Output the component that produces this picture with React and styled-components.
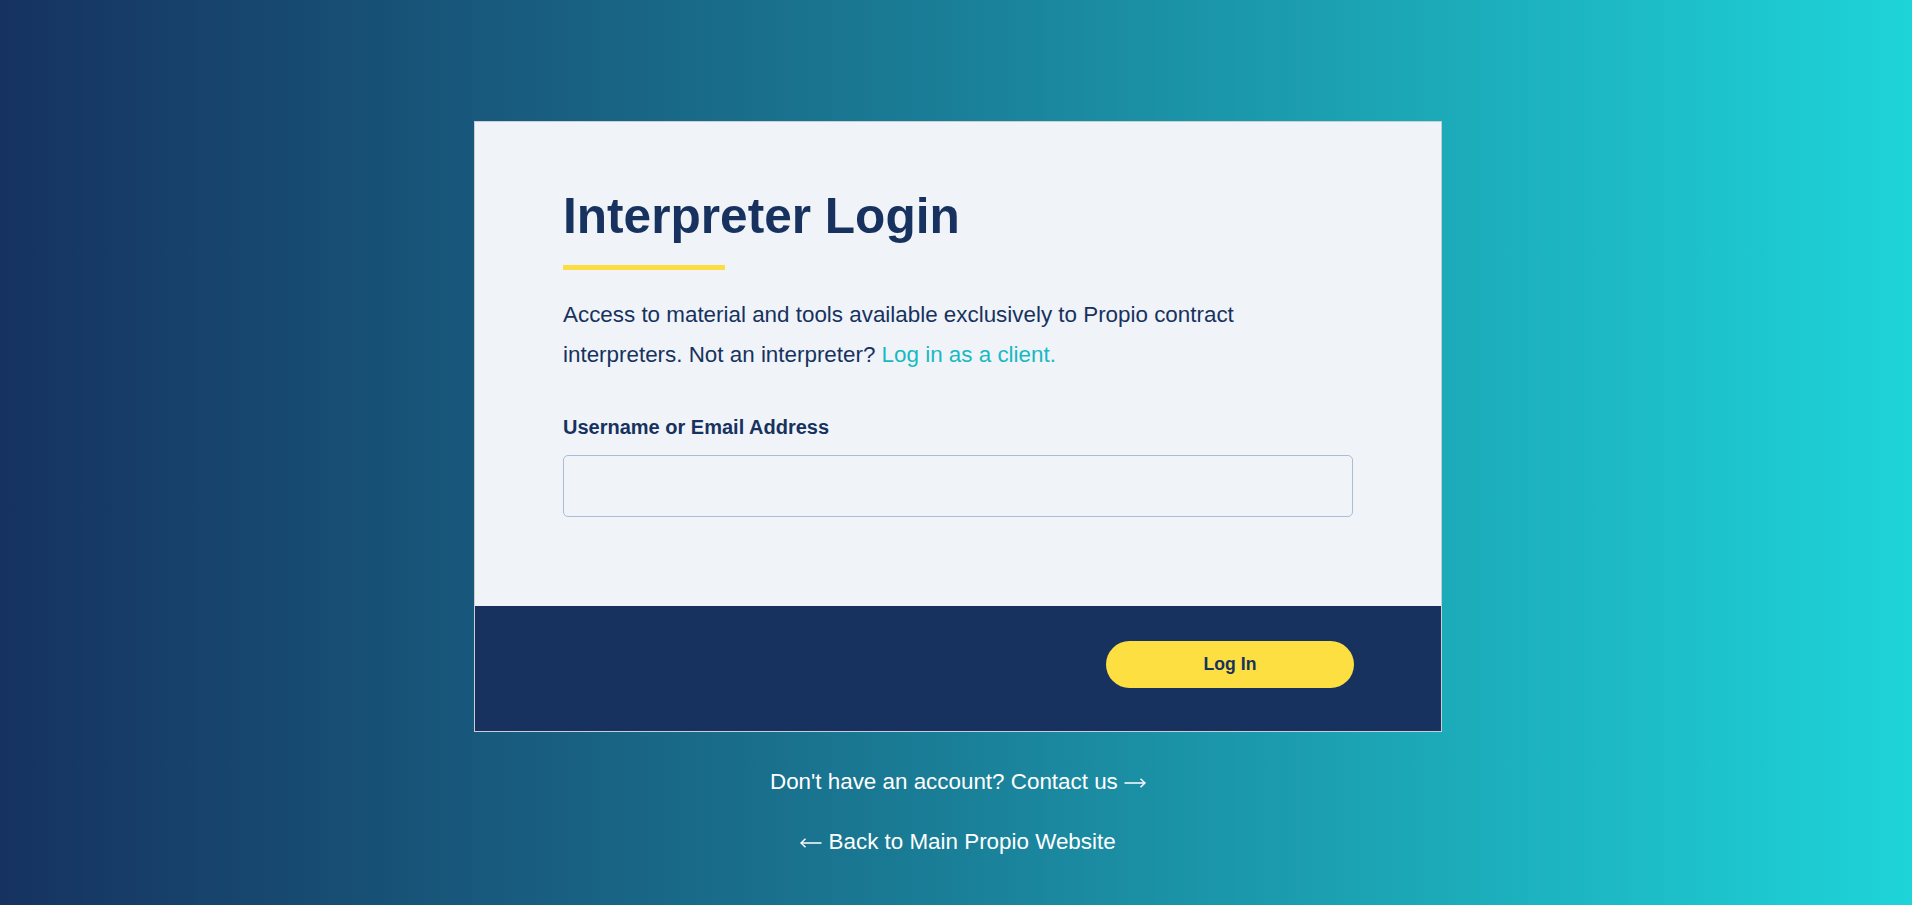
import React from 'react'
import styled, { createGlobalStyle } from 'styled-components'

const GlobalStyle = createGlobalStyle`
  html, body {
    margin: 0;
    padding: 0;
  }
  body {
    font-family: "Liberation Sans", Arial, sans-serif;
  }
  * {
    box-sizing: border-box;
  }
`

const navy = '#17325e'

const Page = styled.div`
  min-height: 100vh;
  background: linear-gradient(90deg, #163260 0%, #1a7f98 50%, #1ed4d9 100%);
  padding: 121px 0 0 4px;
  display: flex;
  flex-direction: column;
  align-items: center;
`

const Card = styled.div`
  width: 968px;
  border: 1px solid #c9ced6;
  background: #f0f4f9;
`

const CardBody = styled.div`
  padding: 66px 88px 89px;
`

const Title = styled.h1`
  margin: 0;
  font-size: 49.6px;
  line-height: 57px;
  font-weight: 700;
  color: ${navy};
`

const Underline = styled.div`
  width: 162px;
  height: 5px;
  margin-top: 20px;
  background: #fdde42;
`

const Intro = styled.p`
  margin: 25px 0 0;
  font-size: 22.4px;
  line-height: 40px;
  color: ${navy};
`

const ClientLink = styled.a`
  color: #18b9c3;
  text-decoration: none;
`

const Label = styled.label`
  display: block;
  margin-top: 41px;
  font-size: 20px;
  line-height: 23px;
  font-weight: 700;
  color: ${navy};
`

const Input = styled.input`
  display: block;
  width: 100%;
  height: 62px;
  margin-top: 16px;
  border: 1px solid #aabdd6;
  border-radius: 5px;
  background: transparent;
  padding: 0 16px;
  font-size: 20px;
  font-family: inherit;
  color: ${navy};
  outline: none;
`

const CardFooter = styled.div`
  background: ${navy};
  padding: 35px 87px 43px;
  display: flex;
  justify-content: flex-end;
`

const LoginButton = styled.button`
  width: 248px;
  height: 47px;
  border: none;
  border-radius: 24px;
  background: #fddf42;
  color: ${navy};
  font-family: inherit;
  font-size: 17.6px;
  font-weight: 700;
  cursor: pointer;
`

const Links = styled.div`
  margin-top: 36px;
  display: flex;
  flex-direction: column;
  align-items: center;
  gap: 33px;
`

const BottomLink = styled.a`
  color: #fff;
  font-size: 22.4px;
  line-height: 27px;
  text-decoration: none;
  white-space: nowrap;
`

const ArrowIcon = styled.svg`
  width: 22px;
  height: 12px;
  vertical-align: 0px;
  transform: ${(p) => (p.$left ? 'scaleX(-1)' : 'none')};
`

function Arrow({ left }) {
  return (
    <ArrowIcon $left={left} viewBox="0 0 22 12" fill="none" stroke="#fff" strokeWidth="1.5">
      <path d="M0.5 6H21" />
      <path d="M16.5 1.8L21 6L16.5 10.2" />
    </ArrowIcon>
  )
}

export default function App() {
  return (
    <>
      <GlobalStyle />
      <Page>
        <Card>
          <CardBody>
            <Title>Interpreter Login</Title>
            <Underline />
            <Intro>
              Access to material and tools available exclusively to Propio contract
              interpreters. Not an interpreter? <ClientLink href="#">Log in as a client.</ClientLink>
            </Intro>
            <Label htmlFor="user">Username or Email Address</Label>
            <Input id="user" type="text" />
          </CardBody>
          <CardFooter>
            <LoginButton>Log In</LoginButton>
          </CardFooter>
        </Card>
        <Links>
          <BottomLink href="#">
            Don't have an account? Contact us <Arrow />
          </BottomLink>
          <BottomLink href="#">
            <Arrow left /> Back to Main Propio Website
          </BottomLink>
        </Links>
      </Page>
    </>
  )
}
